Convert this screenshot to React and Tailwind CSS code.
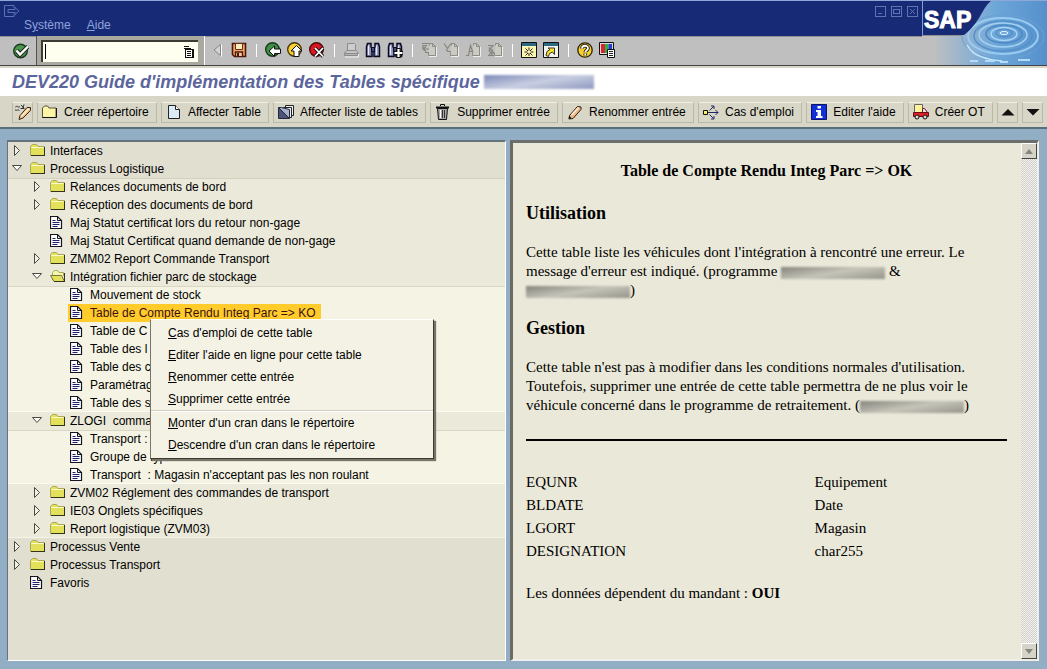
import { useState } from 'react';
import clsx from 'clsx';

/* ---------- icons ---------- */

function Icon({ children, className }) {
    return (
        <svg viewBox="0 0 16 16" className={clsx('h-4 w-4 shrink-0', className)} fill="none" aria-hidden="true">
            {children}
        </svg>
    );
}

const CheckIcon = () => (
    <Icon>
        <circle cx="7.5" cy="8" r="6.8" fill="#4a9650" stroke="#1d3a1f" strokeWidth="1.4" />
        <path d="M3.500 7.500l3.500 4 8-8" stroke="#1c2c1c" strokeWidth="4.400" />
        <path d="M3.500 7.500l3.500 4 8-8" stroke="#fff" strokeWidth="2.400" />
    </Icon>
);

const BackIcon = () => (
    <Icon>
        <circle cx="7.5" cy="7.5" r="6.8" fill="#3f8f45" stroke="#163a1a" strokeWidth="1.4" />
        <path d="M4 9l5.500-5v3h6v4.500h-6v3z" fill="#fff" stroke="#111" />
    </Icon>
);

const ExitIcon = () => (
    <Icon>
        <circle cx="7.5" cy="7.5" r="6.8" fill="#f8d030" stroke="#4a3808" strokeWidth="1.4" />
        <path d="M9.500 3.500l5.500 5.500h-3v5.500H7V9H4z" fill="#fff" stroke="#111" />
    </Icon>
);

const CancelIcon = () => (
    <Icon>
        <circle cx="7.5" cy="7.5" r="6.8" fill="#dd1520" stroke="#4d0a0a" strokeWidth="1.4" />
        <path d="M6 6l8 8.500M14 6l-8 8.500" stroke="#111" strokeWidth="3.400" />
        <path d="M6 6l8 8.500M14 6l-8 8.500" stroke="#fff" strokeWidth="1.800" />
    </Icon>
);

const PreviousIcon = () => (
    <Icon>
        <path d="M11.500 2.500v11L5 8z" fill="#d4d4d4" stroke="#858585" />
        <path d="M12.500 2.500v12" stroke="#fff" />
    </Icon>
);

const SaveIcon = () => (
    <Icon>
        <path d="M1.500 1.500h13v13h-11l-2-2z" fill="#f5a95c" stroke="#4b1810" strokeWidth="1.600" />
        <path d="M4.500 1.500h7v6h-7z" fill="#fdeec0" stroke="#6b2a20" />
        <path d="M4.500 14v-4h7v4" fill="#f3c79a" stroke="#4b1810" strokeWidth="1.400" />
        <path d="M6 11h2v3H6z" fill="#4b1810" />
    </Icon>
);

const PrintIcon = () => (
    <Icon>
        <path d="M4.500 8.500v-7h7l1 1v6" fill="#cdcdcd" stroke="#8b8b8b" />
        <path d="M3.500 8.500h10l2 3H1.500z" fill="#c4c4c4" stroke="#8b8b8b" />
        <path d="M1.500 11.500h13v2h-13z" fill="#b4b4b4" stroke="#8b8b8b" />
        <path d="M2 15h13.500v-3" stroke="#f1f1f1" />
    </Icon>
);

const Binoculars = () => (
    <>
        <path d="M1.500 5l1-3.500h3.500v3.500l1 1v8.500H1.500z" fill="#8d93b8" stroke="#0a0a20" strokeWidth="1.500" />
        <path d="M14.500 5l-1-3.500H10v3.500l-1 1v8.500h5.500z" fill="#8d93b8" stroke="#0a0a20" strokeWidth="1.500" />
        <path d="M6.500 5.500h3v4h-3z" fill="#4a5080" stroke="#0a0a20" />
        <path d="M3.500 3.500v9.500M11.500 3.500v9.500" stroke="#e8eaf8" strokeWidth="1.200" />
    </>
);

const FindIcon = () => (
    <Icon>
        <Binoculars />
    </Icon>
);

const FindNextIcon = () => (
    <Icon>
        <Binoculars />
        <path d="M11.500 6v10M7 11h9" stroke="#111" strokeWidth="4.400" />
        <path d="M11.500 7v8M7.500 11h8" stroke="#fff" strokeWidth="2.200" />
    </Icon>
);

function PageIcon({ mark }) {
    return (
        <Icon>
            <path d="M8.500 3.500v-2h3l3 3v9h-7v-3" fill="#cbcbc4" stroke="#8c8c84" />
            <path d="M11.500 1.500v3h3" stroke="#8c8c84" />
            <path d={mark} stroke="#85857c" strokeWidth="1.200" />
            <path d="M8 14.500h7.500V5" stroke="#eee" />
        </Icon>
    );
}

const FirstPageIcon = () => <PageIcon mark="M1 1.500h7M6 3.500H2v3.500h6M5 4.500l-3 2.500 3 2.500M4 10.500h4" />;
const PrevPageIcon = () => <PageIcon mark="M1 1.500l3.500 5 3.500-5M3 7.500l2 2h3" />;
const NextPageIcon = () => <PageIcon mark="M1 13.500h2.500l2-10 2.500 7M4 9.500h3" />;
const LastPageIcon = () => <PageIcon mark="M1 3.500h5l-4 5 4 5H1M2 5.500l5 6M2 13.500l4-6" />;

const NewSessionIcon = () => (
    <Icon>
        <path d="M.5.500h15v15H.5z" fill="#fbf6b0" stroke="#111" />
        <path d="M1 1h14v3H1z" fill="#2c6a84" />
        <path d="M8 5.500v3M8 11v3M3.500 10h3M9.500 10h3M4.500 6.500l2.500 2.500M11.500 6.500L9 9M4.500 13.500L7 11M11.500 13.500L9 11" stroke="#222" />
    </Icon>
);

const ShortcutIcon = () => (
    <Icon>
        <path d="M.5.500h15v15H.5z" fill="#f4f4ec" stroke="#111" />
        <path d="M1 1h14v3H1z" fill="#2c6a84" />
        <path d="M3 13.500l1-4 3-2-2-1.500h6.500v6.500L9.500 10l-3 1.500-1 3z" fill="#f8e02c" stroke="#222" strokeWidth=".9" />
    </Icon>
);

const HelpIcon = () => (
    <Icon>
        <circle cx="8" cy="8" r="7.2" fill="#f8cf2c" stroke="#2a2208" strokeWidth="1.300" />
        <path d="M5 6.500C5 2.800 11 3 11 6.200c0 2-2.700 2-2.700 4M8.300 11.500v2" stroke="#111" strokeWidth="3.600" />
        <path d="M5 6.500C5 2.800 11 3 11 6.200c0 2-2.700 2-2.700 4M8.300 11.500v2" stroke="#fff" strokeWidth="1.800" />
    </Icon>
);

const LayoutIcon = () => (
    <Icon>
        <path d="M.5.500h14v12H.5z" fill="#ddd" stroke="#111" />
        <path d="M2 2h4v9H2z" fill="#e02030" />
        <path d="M6 2h3.500v9H6z" fill="#22b540" />
        <path d="M9.500 2H13v9H9.500z" fill="#2838d0" />
        <path d="M8.500 7.500h7v8h-7z" fill="#fff" stroke="#111" />
        <path d="M10 9.500h4M10 11.500h4M10 13.500h4" stroke="#222" />
    </Icon>
);

const HistoryIcon = () => (
    <svg viewBox="0 0 10 12" className="h-3 w-2.5 shrink-0" fill="none" shapeRendering="crispEdges" aria-hidden="true">
        <path d="M0 .5h5M0 2.500h7" stroke="#111" />
        <path d="M1.500 3.500h7v8h-7z" fill="#fff" stroke="#111" />
        <path d="M3 5.500h4M3 7.500h4M3 9.500h4M9.500 3v9" stroke="#111" />
    </svg>
);

const ToggleIcon = () => (
    <Icon>
        <path d="M0 3.500c2-3 3 1 5-1M0 6c2 1 3-1 4.500.5M6 1l3 3M9 .5l-1.500 4.500M5.500 4.500h4" stroke="#333" />
        <path d="M15.500 3.500v3L8 14l-4 1.500 1-4 7-8z" fill="#efbf86" stroke="#3a2412" />
        <path d="M6 12.500l8-8" stroke="#fff0d0" strokeWidth="1.400" />
    </Icon>
);

const NewFolderIcon = () => (
    <Icon>
        <path d="M.5 13.500V4l2-2h3l1.500 2h7v9.500z" fill="#fdf4a6" stroke="#555538" />
        <path d="M.5 13.500h14V4" stroke="#111" />
    </Icon>
);

const SheetIcon = () => (
    <Icon>
        <path d="M2.500 1.500h7l4 4v9h-11z" fill="#dcecf6" stroke="#222" />
        <path d="M9.500 1.500v4h4" fill="#fff" stroke="#222" />
    </Icon>
);

const ListIcon = () => (
    <Icon>
        <path d="M7.500 3.500v-2h8v10h-2" fill="#f1f1f4" stroke="#222" />
        <path d="M5.500 5.500v-2h8v10h-2" fill="#f1f1f4" stroke="#222" />
        <path d="M.5 3.500h3l8 2v9H.5z" fill="#a9b0cc" stroke="#22263c" />
        <path d="M1 4v10h10z" fill="#4c5478" />
        <path d="M1 4l10 10" stroke="#22263c" />
    </Icon>
);

const TrashIcon = () => (
    <Icon>
        <path d="M2.500 4.500h10l-1 11h-8z" fill="#a8a8a8" stroke="#111" />
        <path d="M1 3.500h13" stroke="#111" strokeWidth="2" />
        <path d="M5.500 2V.500h4V2" stroke="#111" />
        <path d="M5.500 6v8" stroke="#fff" />
        <path d="M7.500 6v8M9.500 6v8" stroke="#333" />
    </Icon>
);

const PencilIcon = () => (
    <Icon>
        <path d="M2.500 11.500l8-9 3.500.5v2.500l-8 9-4 .5z" fill="#efb988" stroke="#2b1a0c" />
        <path d="M4.500 11l7-7.500" stroke="#fff0e0" strokeWidth="1.400" />
        <path d="M1.500 15l1-3 2 2z" fill="#111" />
    </Icon>
);

const WhereUsedIcon = () => (
    <Icon>
        <path d="M.5 6.500h4v4h-4z" fill="#f4f060" stroke="#111" />
        <path d="M5 8.500h10M12.500 6l2.500 2.500-2.500 2.500M6.500 6.500l4-4M8 2h3v3M6.500 10.500l4 4M8 15h3v-3" stroke="#242464" />
    </Icon>
);

const InfoIcon = () => (
    <Icon>
        <path d="M.5.500h15v15H.5z" fill="#1030d8" stroke="#081468" />
        <path d="M6.500 2h3.500v2.500H6.500zM5 6h5v6h1.500v2H5v-2h1.500V8H5z" fill="#fff" />
    </Icon>
);

const TruckIcon = () => (
    <Icon>
        <path d="M1.500.5h8v8h-8z" fill="#fbf29a" stroke="#666" />
        <path d="M9.500 4.500h2l3 4h-5z" fill="#e8ecf4" stroke="#7a1418" />
        <path d="M.5 8.500h15v4H.5z" fill="#e02028" stroke="#6a0c10" />
        <circle cx="4" cy="13" r="2" fill="#ddd" stroke="#111" />
        <circle cx="12" cy="13" r="2" fill="#ddd" stroke="#111" />
    </Icon>
);

const UpIcon = () => (
    <Icon>
        <path d="M1.500 11.500L8 5l6.500 6.500z" fill="#111" />
    </Icon>
);

const DownIcon = () => (
    <Icon>
        <path d="M1.500 5L8 11.500 14.500 5z" fill="#111" />
    </Icon>
);

const FolderIcon = () => (
    <Icon>
        <path d="M.5 12.500v-9l2-2h4l1.500 2h6.500v9z" fill="#e3e05c" stroke="#a9a758" />
        <path d="M1 12.500h13.500M14.500 4v9" stroke="#33331c" />
        <path d="M1.500 4.500h12" stroke="#fcfbc8" />
    </Icon>
);

const FolderOpenIcon = () => (
    <Icon>
        <path d="M2.500 11V3.500l2-2h3l1.500 2h4.500V7" fill="#f4f3b0" stroke="#a9a758" />
        <path d="M.5 6.500h11l3 6H4z" fill="#e3e05c" stroke="#77753a" />
        <path d="M4 12.500h11M14.500 4v9" stroke="#33331c" />
    </Icon>
);

const DocIcon = () => (
    <Icon>
        <path d="M.5 1.500h7l4 4v8H.5z" fill="#fff" stroke="#15151f" strokeWidth="1.200" />
        <path d="M7.500 1.500v4h4" stroke="#15151f" />
        <path d="M2.500 5.500h3M2.500 7.500h7M2.500 9.500h7M2.500 11.500h5" stroke="#20206c" />
    </Icon>
);

const ClosedArrow = () => (
    <Icon>
        <path d="M4.500 2.500v10l5-5z" fill="#f2f1e6" stroke="#4a4942" />
    </Icon>
);

const OpenArrow = () => (
    <Icon>
        <path d="M2.500 4.500h9l-4.500 5z" fill="#fff" stroke="#4a4942" />
    </Icon>
);

/* ---------- header ---------- */

function SapLogo() {
    return (
        <svg viewBox="0 0 125 66" className="h-[66px] w-[125px] shrink-0" role="img" aria-label="SAP">
            <defs>
                <linearGradient id="water" x1="0" y1="0" x2="1" y2="0">
                    <stop offset=".1" stopColor="#bfbfbf" />
                    <stop offset=".4" stopColor="#8cb0d2" />
                    <stop offset=".6" stopColor="#6ca6d8" />
                    <stop offset="1" stopColor="#5590cc" />
                </linearGradient>
                <clipPath id="pool">
                    <path d="M69 1h56v64H30V36h12z" />
                </clipPath>
            </defs>
            <path d="M0 0h125v66H0z" fill="#bfbfbf" />
            <path d="M69 1h56v64H0V36h36z" fill="url(#water)" />
            <g clipPath="url(#pool)" fill="none">
                <ellipse cx="82" cy="33" rx="4" ry="1.5" stroke="#e4f4ff" />
                <ellipse cx="82" cy="33" rx="8" ry="4" stroke="#4a86c0" />
                <ellipse cx="82" cy="34" rx="13" ry="6.500" stroke="#a8d4f4" strokeWidth="1.500" />
                <ellipse cx="82" cy="34" rx="18" ry="9" stroke="#4c88c2" strokeWidth="1.500" />
                <ellipse cx="81" cy="35" rx="24" ry="12" stroke="#a4d0f2" strokeWidth="1.500" />
                <ellipse cx="81" cy="36" rx="29" ry="15" stroke="#5590c8" strokeWidth="1.500" />
                <ellipse cx="81" cy="36" rx="35" ry="18" stroke="#9accf2" strokeWidth="2" />
                <ellipse cx="81" cy="37" rx="41" ry="22" stroke="#6aa0d2" />
                <path d="M45 45c4 8 12 12 22 14M50 52c8 6 18 8 30 9" stroke="#c4e6fa" strokeWidth="1.500" />
                <path d="M48 61h8M63 61h10M78 62h8M96 60h12" stroke="#b4dcf8" strokeWidth="2" />
            </g>
            <path d="M0 1h69c-9 7-11 22-27 34H0z" fill="#172a76" />
            <path d="M0 35.500h40" stroke="#8f8f94" />
            <path d="M0 .5h125" stroke="#8ea6d8" />
            <path d="M.5 1v34" stroke="#8b9bd0" />
            <text
                x="2"
                y="28"
                fill="#fff"
                stroke="#fff"
                strokeWidth="1"
                fontFamily="'Liberation Sans', Arial, sans-serif"
                fontWeight="700"
                fontSize="23"
            >
                SAP
            </text>
            <path d="M0 65.500h125" stroke="#444" />
        </svg>
    );
}

function WindowButton({ label, children }) {
    return (
        <button type="button" aria-label={label} className="h-[11px] w-[11px]">
            <svg viewBox="0 0 11 11" className="h-[11px] w-[11px]" fill="none" stroke="#6273b4" shapeRendering="crispEdges">
                <path d="M.5.500h10v10H.5z" />
                {children}
            </svg>
        </button>
    );
}

function TitleBar() {
    return (
        <div className="flex h-9 items-start justify-between border-t border-[#8ea6d8] bg-[#172a76] pl-1 text-[#8ea2dc]">
            <div>
                <svg viewBox="0 0 16 12" className="mt-1 h-3 w-4" fill="none" stroke="#5f70b4" aria-hidden="true">
                    <path d="M10 .5H.5v11H10V9M10 3V.500M4 4.500h7V2.500l4 3.500-4 3.500v-2H4z" />
                </svg>
                <nav className="ml-5 flex gap-4 leading-[17px]">
                    <a href="#systeme">S<u>y</u>stème</a>
                    <a href="#aide"><u>A</u>ide</a>
                </nav>
            </div>
            <div className="mt-[5px] mr-1 flex gap-[5px]">
                <WindowButton label="Réduire"><path d="M3 7.500h4" /></WindowButton>
                <WindowButton label="Agrandir"><path d="M2.500 3.500h6v4h-6z" /></WindowButton>
                <WindowButton label="Fermer"><path d="M3 3l5 5M8 3L3 8" /></WindowButton>
            </div>
        </div>
    );
}

// null marks a separator
const SYSTEM_BUTTONS = [
    ['Sauvegarder', SaveIcon],
    null,
    ['Retour', BackIcon],
    ['Terminer', ExitIcon],
    ['Interrompre', CancelIcon],
    null,
    ['Imprimer', PrintIcon],
    ['Rechercher', FindIcon],
    ['Poursuivre recherche', FindNextIcon],
    null,
    ['Première page', FirstPageIcon],
    ['Page précédente', PrevPageIcon],
    ['Page suivante', NextPageIcon],
    ['Dernière page', LastPageIcon],
    null,
    ['Nouveau mode', NewSessionIcon],
    ['Créer lien', ShortcutIcon],
    null,
    ['Aide', HelpIcon],
    ['Adapter présentation', LayoutIcon],
];

function SystemBar() {
    return (
        <div className="flex h-[30px] items-stretch border-b border-[#444] bg-[#bfbfbf] shadow-[inset_0_1px_#8f8f94]">
            <button type="button" aria-label="Entrée" className="flex w-[37px] items-center justify-end border-r border-[#555] pr-[7px]">
                <CheckIcon />
            </button>
            <div className="flex w-[168px] items-center border-r border-white bg-[#aaa99f] pr-1.5 pl-1">
                <label className="flex h-[22px] w-full items-center border-t-2 border-l-2 border-[#3c3c34] bg-[#fffff0] pr-1 pl-0.5">
                    <span className="h-[15px] w-px bg-black"></span>
                    <input aria-label="Commande" className="min-w-0 flex-1 bg-transparent outline-none" />
                    <HistoryIcon />
                </label>
            </div>
            <div className="flex items-center gap-1.5 pb-px pl-1">
                <button type="button" aria-label="Précédent"><PreviousIcon /></button>
                {SYSTEM_BUTTONS.map((item, i) => {
                    if (!item) {
                        return <span key={i} className="mx-0.5 h-[13px] w-0.5 border-r border-white"></span>;
                    }
                    const [label, Glyph] = item;
                    return (
                        <button key={i} type="button" aria-label={label}>
                            <Glyph />
                        </button>
                    );
                })}
            </div>
        </div>
    );
}

const ACTIONS = [
    ['Créer répertoire', NewFolderIcon],
    ['Affecter Table', SheetIcon],
    ['Affecter liste de tables', ListIcon],
    ['Supprimer entrée', TrashIcon],
    ['Renommer entrée', PencilIcon],
    ["Cas d'emploi", WhereUsedIcon],
    ["Editer l'aide", InfoIcon],
    ['Créer OT', TruckIcon],
];

const ACTION_CLASS = 'flex h-[21px] items-center border border-t-[#f0efe4] border-l-[#bab8a6] border-r-[#bab8a6] border-b-[#bab8a6] whitespace-nowrap';

function ActionBar() {
    return (
        <div className="flex h-8 items-center gap-1 border-b-2 border-b-[#59707c] bg-[#d8d6c6] pr-1 pl-3">
            <button type="button" aria-label="Afficher/Modifier" className={clsx(ACTION_CLASS, 'w-[21px] justify-center')}>
                <ToggleIcon />
            </button>
            {ACTIONS.map(([label, Glyph]) => (
                <button key={label} type="button" className={clsx(ACTION_CLASS, 'grow gap-1.5 px-1')}>
                    <Glyph />
                    {label}
                </button>
            ))}
            <button type="button" aria-label="Monter" className={clsx(ACTION_CLASS, 'w-[21px] justify-center')}>
                <UpIcon />
            </button>
            <button type="button" aria-label="Descendre" className={clsx(ACTION_CLASS, 'w-[21px] justify-center')}>
                <DownIcon />
            </button>
        </div>
    );
}

/* ---------- tree ---------- */

const TREE = [
    { label: 'Interfaces', children: [] },
    {
        label: 'Processus Logistique',
        open: true,
        children: [
            { label: 'Relances documents de bord', children: [] },
            { label: 'Réception des documents de bord', children: [] },
            { label: 'Maj Statut certificat lors du retour non-gage' },
            { label: 'Maj Statut Certificat quand demande de non-gage' },
            { label: 'ZMM02 Report Commande Transport', children: [] },
            {
                label: 'Intégration fichier parc de stockage',
                open: true,
                openFolder: true,
                children: [
                    { label: 'Mouvement de stock' },
                    { label: 'Table de Compte Rendu Integ Parc => KO', selected: true },
                    { label: 'Table de C' },
                    { label: 'Table des l' },
                    { label: 'Table des c' },
                    { label: 'Paramétrag' },
                    { label: 'Table des s' },
                ],
            },
            {
                label: 'ZLOGI  comma',
                open: true,
                children: [
                    { label: 'Transport :' },
                    { label: "Groupe de type de commandes d'achat" },
                    { label: "Transport  : Magasin n'acceptant pas les non roulant" },
                ],
            },
            { label: 'ZVM02 Réglement des commandes de transport', children: [] },
            { label: 'IE03 Onglets spécifiques', children: [] },
            { label: 'Report logistique (ZVM03)', children: [] },
        ],
    },
    { label: 'Processus Vente', children: [] },
    { label: 'Processus Transport', children: [] },
    { label: 'Favoris' },
];

const LEVEL_BG = [
    '',
    'bg-[#ebe9da] shadow-[inset_0_1px_#d3d0be,inset_0_-1px_#f5f4e8]',
    'bg-[#f5f3e4] shadow-[inset_0_1px_#d9d6c6,inset_0_-1px_#fbfaf0]',
];

// indent sits on the row, so the shaded band of a level spans the full width
const INDENT = ['pl-0.5', 'pl-[22px]', 'pl-[42px]'];

function TreeNode({ node, level }) {
    const [open, setOpen] = useState(Boolean(node.open));
    const isFolder = Boolean(node.children);

    return (
        <li>
            <div className={clsx('flex h-[18px] items-center', INDENT[level])}>
                {isFolder ? (
                    <button type="button" aria-label={node.label} aria-expanded={open} onClick={() => setOpen(!open)} className="w-5">
                        {open ? <OpenArrow /> : <ClosedArrow />}
                    </button>
                ) : (
                    <span className="w-5"></span>
                )}
                <span
                    className={clsx(
                        'flex h-[18px] items-center gap-1 pr-1.5 whitespace-pre',
                        node.selected && '-ml-0.5 bg-[#ffcc2c] pl-0.5 text-[#3c1010]'
                    )}
                >
                    {!isFolder && <DocIcon />}
                    {isFolder && (node.openFolder && open ? <FolderOpenIcon /> : <FolderIcon />)}
                    {node.label}
                </span>
            </div>
            {isFolder && open && <TreeList nodes={node.children} level={level + 1} />}
        </li>
    );
}

function TreeList({ nodes, level }) {
    return (
        <ul className={LEVEL_BG[level]}>
            {nodes.map((node, i) => (
                <TreeNode key={i} node={node} level={level} />
            ))}
        </ul>
    );
}

const MENU = [
    ['C', "as d'emploi de cette table"],
    ['E', "diter l'aide en ligne pour cette table"],
    ['R', 'enommer cette entrée'],
    ['S', 'upprimer cette entrée'],
    null,
    ['M', "onter d'un cran dans le répertoire"],
    ['D', "escendre d'un cran dans le répertoire"],
];

function ContextMenu() {
    return (
        <div
            role="menu"
            className="absolute top-[177px] left-[142px] w-[284px] border border-t-white border-r-[#3c3a30] border-b-[#3c3a30] border-l-[#77756a] bg-[#f4f2e4] py-0.5 shadow-[2px_2px_1px_#77756a]"
        >
            {MENU.map((item, i) =>
                item ? (
                    <button key={i} type="button" role="menuitem" className="block h-[22px] w-full pl-[17px] text-left whitespace-nowrap">
                        <u>{item[0]}</u>
                        {item[1]}
                    </button>
                ) : (
                    <hr key={i} className="border-t border-b border-t-[#d0cdbc] border-b-white" />
                )
            )}
        </div>
    );
}

/* ---------- documentation ---------- */

const FIELDS = [
    ['EQUNR', 'Equipement'],
    ['BLDATE', 'Date'],
    ['LGORT', 'Magasin'],
    ['DESIGNATION', 'char255'],
];

// blurred-out name
const Masked = () => (
    <span className="inline-block h-3 w-[104px] bg-linear-170 from-[#86857c] via-[#c6c5ba] to-[#96958b] align-middle blur-[1px]"></span>
);

function Documentation() {
    return (
        <article className="min-w-0 flex-1 pt-[18px] pr-3.5 pl-[13px] font-['Liberation_Serif',serif] text-[15px] leading-[19px]">
            <h1 className="text-center text-base leading-5 font-bold">Table de Compte Rendu Integ Parc =&gt; OK</h1>

            <h2 className="mt-[22px] text-lg leading-5 font-bold">Utilisation</h2>
            <p className="mt-5">
                Cette table liste les véhicules dont l'intégration à rencontré une erreur. Le message d'erreur est indiqué.
                (programme <Masked /> &amp; <Masked />)
            </p>

            <h2 className="mt-[18px] text-lg leading-5 font-bold">Gestion</h2>
            <p className="mt-5">
                Cette table n'est pas à modifier dans les conditions normales d'utilisation. Toutefois, supprimer une entrée
                de cette table permettra de ne plus voir le véhicule concerné dans le programme de retraitement. (<Masked />)
            </p>

            <hr className="mt-6 border-t-2 border-black" />

            <table className="mt-[30px] w-full">
                <tbody>
                    {FIELDS.map(([name, text]) => (
                        <tr key={name} className="h-[23px]">
                            <td className="w-3/5">{name}</td>
                            <td>{text}</td>
                        </tr>
                    ))}
                </tbody>
            </table>

            <p className="mt-[21px]">
                Les données dépendent du mandant : <b>OUI</b>
            </p>
        </article>
    );
}

const SCROLL_BUTTON = 'flex h-4 w-4 items-center justify-center border border-t-white border-l-white border-r-[#44433c] border-b-[#44433c] bg-[#d6d4c8]';

function ScrollBar() {
    return (
        <div className="flex w-4 flex-col justify-between bg-[#e6e4e0] bg-[repeating-conic-gradient(#d2cfcb_0_25%,#f4f2ef_0_50%)] bg-size-[2px_2px]">
            <button type="button" aria-label="Défiler vers le haut" className={SCROLL_BUTTON}>
                <svg viewBox="0 0 8 5" className="h-[5px] w-2"><path d="M0 5l4-5 4 5z" fill="#88867c" /></svg>
            </button>
            <button type="button" aria-label="Défiler vers le bas" className={SCROLL_BUTTON}>
                <svg viewBox="0 0 8 5" className="h-[5px] w-2"><path d="M0 0l4 5 4-5z" fill="#88867c" /></svg>
            </button>
        </div>
    );
}

export default function App() {
    return (
        <div className="flex min-h-screen flex-col bg-[#91aec4] font-['Liberation_Sans',Arial,sans-serif] text-xs text-black">
            <header>
                <div className="flex">
                    <div className="min-w-0 flex-1">
                        <TitleBar />
                        <SystemBar />
                    </div>
                    <SapLogo />
                </div>
                <div className="flex h-[31px] items-center border-t-2 border-b border-t-[#d8d6c6] border-b-[#d8d6c6] bg-white pl-3">
                    <h1 className="text-lg font-bold whitespace-nowrap text-[#5c659c] italic">
                        DEV220 Guide d'implémentation des Tables spécifique
                    </h1>
                    <span className="ml-1 h-3.5 w-[110px] bg-linear-170 from-[#7f8ab8] via-[#c9cfe2] to-[#8f99c0] blur-[1px]"></span>
                </div>
                <ActionBar />
            </header>

            <main className="grid flex-1 grid-cols-[499fr_529fr] gap-1 pt-[11px] pr-2 pb-2 pl-[7px]">
                <section aria-label="Répertoire" className="relative border-t-2 border-r border-b border-l border-t-[#66737c] border-r-white border-b-white border-l-[#66737c] bg-[#e1dfd0]">
                    <TreeList nodes={TREE} level={0} />
                    <ContextMenu />
                </section>
                <section className="flex border-t-[3px] border-r-2 border-b-2 border-l-[3px] border-t-[#6c6f6c] border-r-[#eeeeea] border-b-[#eeeeea] border-l-[#6c6a62] bg-[#eae8d8]">
                    <Documentation />
                    <ScrollBar />
                </section>
            </main>
        </div>
    );
}
